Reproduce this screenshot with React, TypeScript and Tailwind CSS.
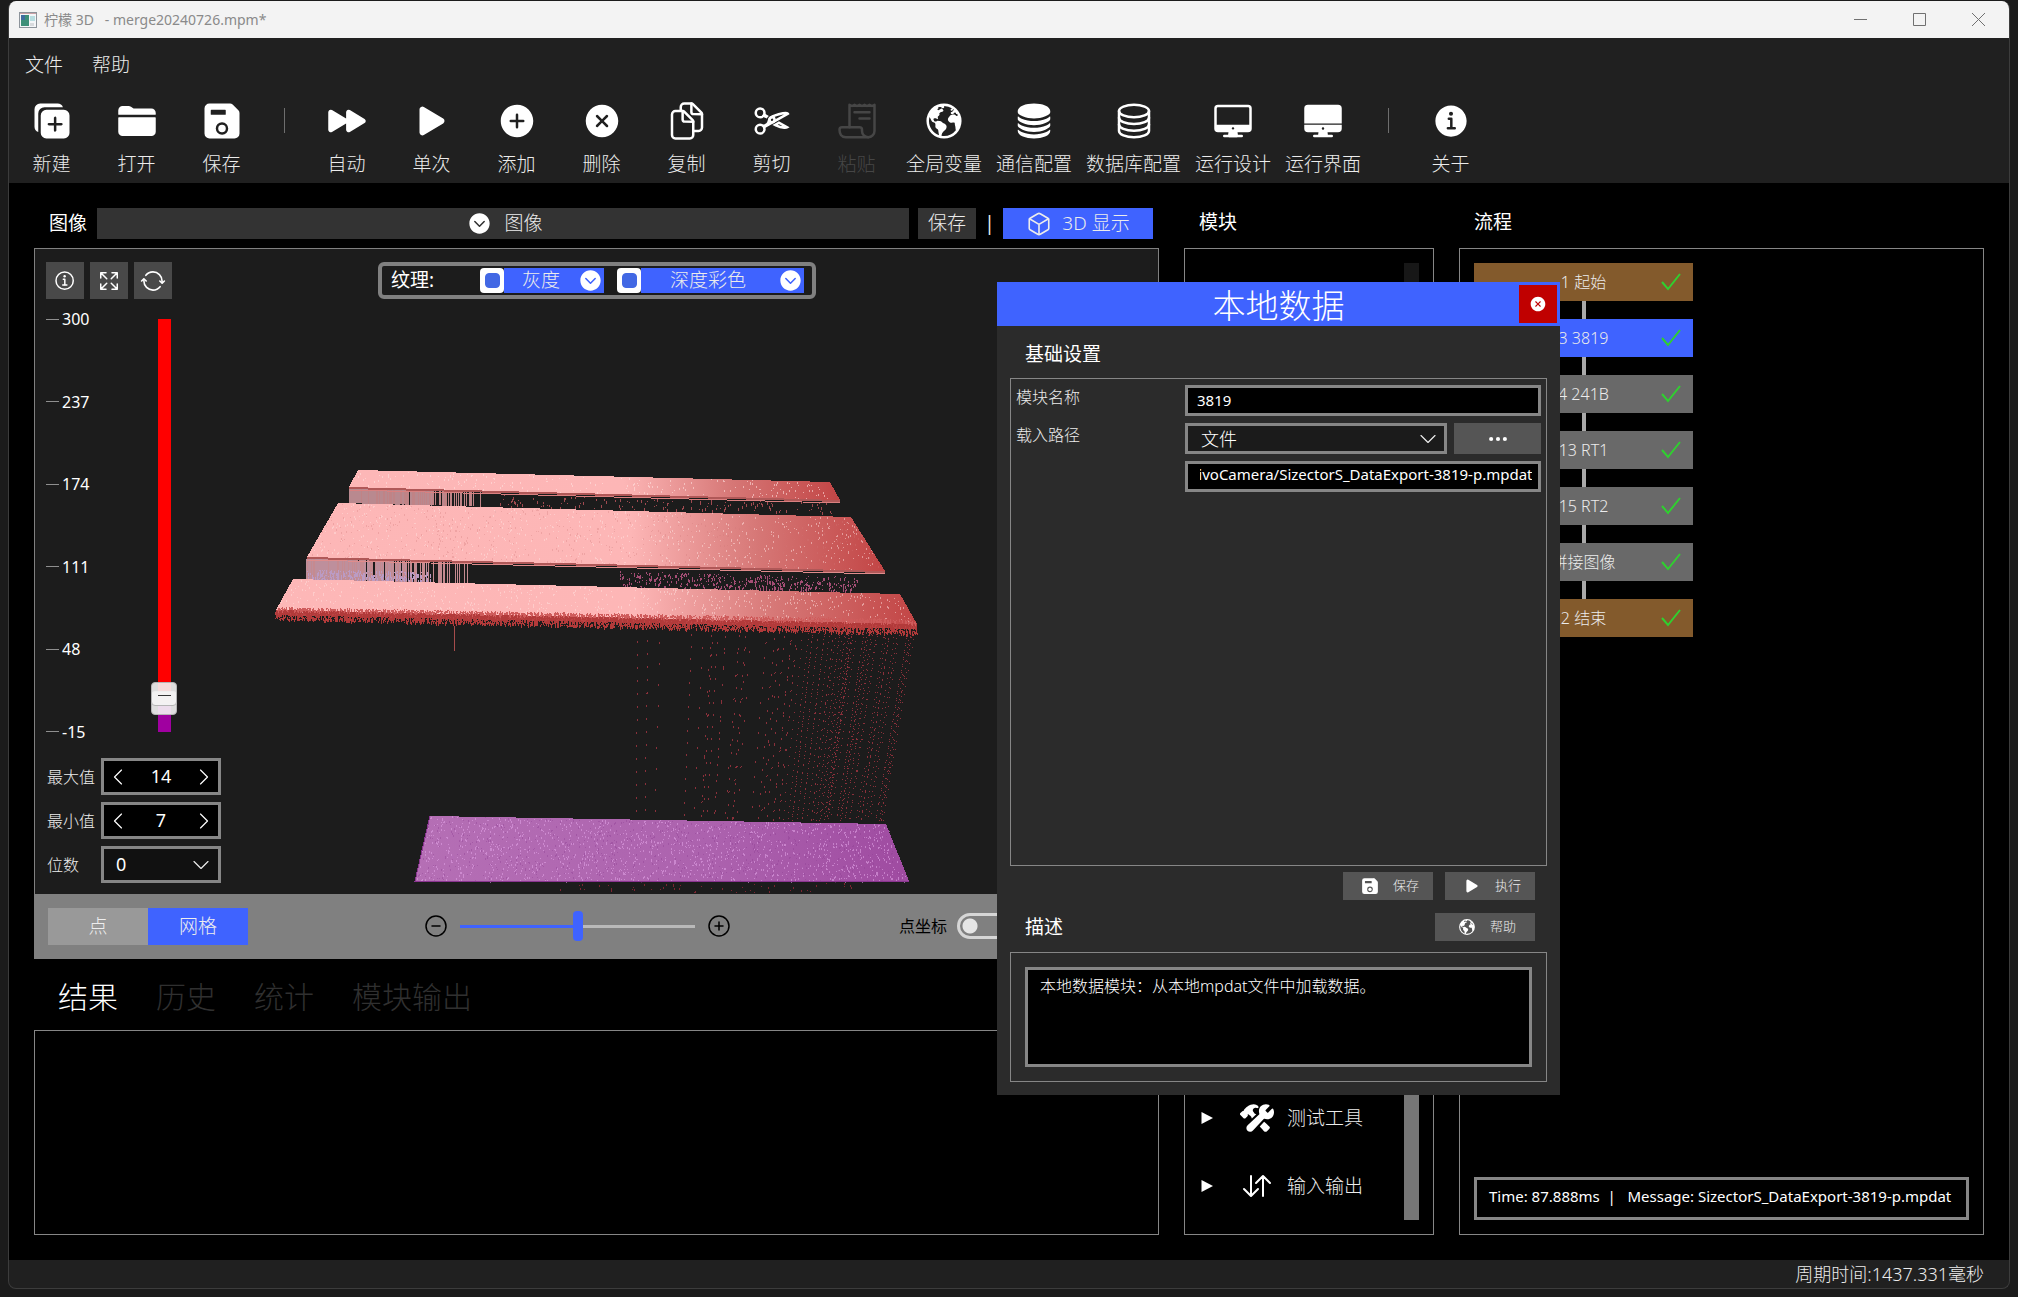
import { useEffect, useRef, useState } from 'react';
import type { ReactNode } from 'react';
import {
    IoAddCircle, IoChevronDownCircle, IoCloseCircle, IoConstruct, IoCubeOutline, IoCutOutline, IoDesktop,
    IoDesktopOutline, IoDocumentsOutline, IoDuplicate, IoEarth, IoEllipsisHorizontal, IoExpandOutline, IoFolder,
    IoInformationCircle, IoInformationCircleOutline, IoPlay, IoPlayForward, IoSave, IoServer, IoServerOutline,
    IoSwapVertical, IoSyncOutline,
} from 'react-icons/io5';
import { ChevronDown, ChevronLeft, ChevronRight, CircleMinus, CirclePlus } from 'lucide-react';

type Point = [number, number];
type Quad = [Point, Point, Point, Point];

const BOX = 'border-[3px] border-[#868686] text-white outline-none';

const flowNodes = [
    { name: '1 起始', color: 'bg-[#835a2c]' },
    { name: '3 3819', color: 'bg-[#3f63ff]' },
    { name: '4 241B', color: 'bg-[#696969]' },
    { name: '13 RT1', color: 'bg-[#696969]' },
    { name: '15 RT2', color: 'bg-[#696969]' },
    { name: '拼接图像', color: 'bg-[#696969]' },
    { name: '2 结束', color: 'bg-[#835a2c]' },
];

export default function App() {
    return (
        <div className="flex min-h-screen flex-col bg-[#1b1b1b] pt-px pr-2 pb-2 pl-2 font-['Noto_Sans','Noto_Sans_CJK_SC',sans-serif] text-base font-light text-[#ececec]">
            <div className="relative flex flex-1 flex-col overflow-hidden rounded-lg border-x border-b border-[#3c3c3c] bg-[#202020]">
                <TitleBar />
                <nav className="flex h-[54px] items-center gap-[29px] px-4 pt-px text-[19px]">
                    <button type="button">文件</button>
                    <button type="button">帮助</button>
                </nav>
                <Toolbar />
                <main className="flex flex-1 gap-[25px] bg-black p-[25px]">
                    <ImageColumn />
                    <ModuleColumn />
                    <FlowColumn />
                </main>
                <footer className="flex h-7 items-center justify-end px-[25px] text-[18px]">周期时间:1437.331毫秒</footer>
                <LocalDataDialog />
            </div>
        </div>
    )
}

function TitleBar() {
    return (
        <header className="flex h-[37px] items-center bg-[#f3f3f3] pl-2.5 font-normal text-[#8a8a8a]">
            <svg viewBox="0 0 18 16" className="h-4 w-[18px]">
                <rect x="0.5" y="0.5" width="17" height="15" fill="#f4f6f8" stroke="#8d949b" />
                <path d="M1 1.5h16" stroke="#c9a0a5" />
                <rect x="2" y="3" width="8" height="11" fill="#3d8f78" />
                <rect x="2" y="3" width="4" height="5" fill="#3f6d9e" />
                <rect x="11" y="4" width="5" height="5" fill="#b8dde0" />
                <rect x="11" y="11" width="4" height="3" fill="#d7dadd" />
            </svg>
            <span className="pl-[7px] text-[14px] whitespace-pre">柠檬 3D   - merge20240726.mpm*</span>
            <div className="ml-auto flex pr-px">
                <WindowButton label="最小化" path="M1 7.5h13" />
                <WindowButton label="最大化" path="M1.5 1.5h12v12h-12z" />
                <WindowButton label="关闭" path="M1 1l13 13M14 1L1 14" />
            </div>
        </header>
    )
}

function WindowButton({ label, path }: { label: string, path: string }) {
    return (
        <button type="button" aria-label={label} className="flex h-[37px] w-[59px] items-center justify-center">
            <svg viewBox="0 0 15 15" className="size-[15px]" fill="none" stroke="#707070"><path d={path} /></svg>
        </button>
    )
}

function ToolItem({ icon, label, disabled }: { icon: ReactNode, label: string, disabled?: boolean }) {
    return (
        <button type="button" disabled={disabled} className="flex min-w-[85px] flex-col items-center gap-[9px] px-[7px] pt-[9px] text-[19px] leading-[28px] text-[#ececec] disabled:text-[#464646]">
            {icon}
            <span>{label}</span>
        </button>
    )
}

function Divider() {
    return <div className="mr-[19px] ml-5 mt-4 h-[25px] w-px shrink-0 bg-[#6e6e6e]" />
}

function Toolbar() {
    return (
        <div className="flex h-[91px] items-start">
            <ToolItem icon={<IoDuplicate size={40} color="#fff" />} label="新建" />
            <ToolItem icon={<IoFolder size={40} color="#fff" />} label="打开" />
            <ToolItem icon={<IoSave size={40} color="#fff" />} label="保存" />
            <Divider />
            <ToolItem icon={<IoPlayForward size={40} color="#fff" />} label="自动" />
            <ToolItem icon={<IoPlay size={40} color="#fff" />} label="单次" />
            <ToolItem icon={<IoAddCircle size={40} color="#fff" />} label="添加" />
            <ToolItem icon={<IoCloseCircle size={40} color="#fff" />} label="删除" />
            <ToolItem icon={<IoDocumentsOutline size={40} color="#fff" />} label="复制" />
            <ToolItem icon={<IoCutOutline size={40} color="#fff" />} label="剪切" />
            <ToolItem icon={<PasteIcon />} label="粘贴" disabled />
            <ToolItem icon={<IoEarth size={40} color="#fff" />} label="全局变量" />
            <ToolItem icon={<IoServer size={40} color="#fff" />} label="通信配置" />
            <ToolItem icon={<IoServerOutline size={40} color="#fff" />} label="数据库配置" />
            <ToolItem icon={<IoDesktopOutline size={40} color="#fff" />} label="运行设计" />
            <ToolItem icon={<IoDesktop size={40} color="#fff" />} label="运行界面" />
            <Divider />
            <ToolItem icon={<IoInformationCircle size={40} color="#fff" />} label="关于" />
        </div>
    )
}

function PasteIcon() {
    return (
        <svg viewBox="0 0 512 512" className="size-10" fill="none" stroke="currentColor" strokeWidth="32" strokeLinejoin="round" strokeLinecap="round">
            <path d="M160 336V48l32 16 32-16 32 16 32-16 32 16 32-16 32 16 32-16 32 16 32-16v336a80 80 0 01-80 80" />
            <path d="M400 464a80 80 0 01-80-80v-16a32 32 0 00-32-32H64a32 32 0 00-32 32c0 50 24 96 80 96h288" />
            <path d="M224 144h192M288 224h128" />
        </svg>
    )
}

function ImageColumn() {
    return (
        <section className="flex min-w-0 flex-1 flex-col">
            <div className="flex items-center pr-[6px] text-[19px]">
                <h2 className="w-[63px] pl-[15px] font-normal text-white">图像</h2>
                <button type="button" className="flex h-[31px] flex-1 items-center justify-center gap-3 bg-[#333] pl-1">
                    <IoChevronDownCircle size={25} className="text-white" />
                    图像
                </button>
                <button type="button" className="ml-[9px] h-[31px] w-[58px] bg-[#333]">保存</button>
                <span className="w-[27px] text-center font-normal">|</span>
                <button type="button" className="flex h-[31px] w-[150px] items-center justify-center gap-2.5 bg-[#3f63ff]">
                    <IoCubeOutline size={26} />
                    3D 显示
                </button>
            </div>
            <Viewport />
            <div className="flex h-[71px] items-center gap-[38px] px-6 pt-1 text-[30px] text-[#303030]" role="tablist">
                <button type="button" role="tab" aria-selected className="text-white">结果</button>
                <button type="button" role="tab">历史</button>
                <button type="button" role="tab">统计</button>
                <button type="button" role="tab">模块输出</button>
            </div>
            <div className="flex-1 border border-[#868686]" />
        </section>
    )
}

function Viewport() {
    const [zoom, setZoom] = useState(50);
    return (
        <div className="mt-[9px] flex h-[711px] flex-col border border-[#808080] bg-[#1c1c1c]">
            <div className="relative flex-1 overflow-hidden">
                <PointCloud />
                <div className="relative flex items-start pt-[13px] pl-[11px]">
                    <div className="flex gap-[6px] text-white">
                        <button type="button" aria-label="信息" className="flex h-[37px] w-[38px] items-center justify-center bg-[#494949]"><IoInformationCircleOutline size={24} /></button>
                        <button type="button" aria-label="全屏" className="flex h-[37px] w-[38px] items-center justify-center bg-[#494949]"><IoExpandOutline size={24} /></button>
                        <button type="button" aria-label="刷新" className="flex h-[37px] w-[38px] items-center justify-center bg-[#494949]"><IoSyncOutline size={26} /></button>
                    </div>
                    <TextureBar />
                </div>
                <DepthScale />
                <DepthFields />
            </div>
            <div className="flex h-16 items-center bg-[#808080] pl-[13px]">
                <div className="flex text-[19px] text-[#eee]">
                    <button type="button" className="h-[37px] w-[100px] bg-[#999]">点</button>
                    <button type="button" className="h-[37px] w-[100px] bg-[#3f63ff]">网格</button>
                </div>
                <div className="ml-[176px] flex items-center gap-3 text-black">
                    <button type="button" aria-label="缩小"><CircleMinus size={24} strokeWidth={1.5} /></button>
                    <input
                        type="range"
                        aria-label="缩放"
                        value={zoom}
                        onChange={(evt) => setZoom(Number(evt.target.value))}
                        className="h-[3px] w-[235px] appearance-none bg-linear-to-r from-[#3f63ff] from-50% to-[#b9b9b9] to-50% [&::-webkit-slider-thumb]:h-[30px] [&::-webkit-slider-thumb]:w-2.5 [&::-webkit-slider-thumb]:appearance-none [&::-webkit-slider-thumb]:rounded-[4px] [&::-webkit-slider-thumb]:bg-[#3f63ff]"
                    />
                    <button type="button" aria-label="放大"><CirclePlus size={24} strokeWidth={1.5} /></button>
                </div>
                <label className="ml-[168px] flex items-center gap-2.5 font-normal text-black">
                    点坐标
                    <input type="checkbox" role="switch" className="h-[26px] w-[60px] appearance-none rounded-full border-[3px] border-[#d6d6d6] bg-[radial-gradient(circle_at_10px_10px,#e6e6e6_7px,transparent_8px)]" />
                </label>
            </div>
        </div>
    )
}

function TextureBar() {
    return (
        <div className="ml-[206px] flex h-[37px] items-center rounded-md border-4 border-[#808080] pr-2 pl-[9px] text-[19px]">
            <span className="w-[89px] font-normal text-white">纹理:</span>
            <TextureCheck label="灰度" />
            <button type="button" className="mr-[13px] flex h-[25px] w-[100px] items-center justify-end gap-[18px] bg-[#3f63ff] pr-px">
                灰度
                <IoChevronDownCircle size={25} className="text-white" />
            </button>
            <TextureCheck label="深度彩色" />
            <button type="button" className="flex h-[25px] w-[163px] items-center justify-end gap-8 bg-[#3f63ff] pr-px">
                深度彩色
                <IoChevronDownCircle size={25} className="text-white" />
            </button>
        </div>
    )
}

function TextureCheck({ label }: { label: string }) {
    return (
        <label className="relative flex h-[25px] w-6 items-center justify-center rounded-[4px] bg-white">
            <input type="checkbox" defaultChecked aria-label={label} className="size-[15px] appearance-none rounded-[4px] border border-[#4268e4] checked:bg-[#4268e4]" />
        </label>
    )
}

function DepthScale() {
    const [range, setRange] = useState({ max: 14, min: 7 });
    const slider = 'pointer-events-none absolute -top-3 left-0 h-[437px] w-[26px] appearance-none bg-transparent [direction:rtl] [writing-mode:vertical-lr] [&::-webkit-slider-thumb]:pointer-events-auto [&::-webkit-slider-thumb]:h-6 [&::-webkit-slider-thumb]:w-[26px] [&::-webkit-slider-thumb]:appearance-none [&::-webkit-slider-thumb]:rounded-[4px] [&::-webkit-slider-thumb]:border [&::-webkit-slider-thumb]:border-[#b5b5b5] [&::-webkit-slider-thumb]:bg-[#f4f4f4]/90';
    return (
        <div className="relative mt-[7px] flex pl-[11px]">
            <ul className="flex h-[439px] w-[105px] flex-col justify-between leading-[26px] font-normal text-white">
                {[300, 237, 174, 111, 48, -15].map((tick) => (
                    <li key={tick} className="flex items-center gap-[3px]">
                        <span className="h-px w-[13px] bg-[#8f8f8f]" />
                        {tick}
                    </li>
                ))}
            </ul>
            <div className="relative my-[13px] h-[413px] w-[26px]">
                <div className="mx-auto flex h-full w-[13px] flex-col justify-end bg-[#f00]">
                    <div className="h-[29px] bg-[#a000a0]" />
                </div>
                <input type="range" aria-label="最小值" min={-15} max={300} value={range.min} onChange={(evt) => setRange({ ...range, min: Number(evt.target.value) })} className={slider} />
                <input type="range" aria-label="最大值" min={-15} max={300} value={range.max} onChange={(evt) => setRange({ ...range, max: Number(evt.target.value) })} className={slider} />
                <span className="pointer-events-none absolute bottom-9 left-[7px] h-px w-[13px] bg-[#333]" />
            </div>
        </div>
    )
}

function DepthFields() {
    return (
        <div className="relative mt-[13px] flex flex-col gap-[7px] pl-3">
            <Stepper id="depth-max" label="最大值" value={14} />
            <Stepper id="depth-min" label="最小值" value={7} />
            <div className="relative flex items-center">
                <label htmlFor="digits" className="w-[54px]">位数</label>
                <select id="digits" className={`h-[37px] w-[120px] appearance-none bg-[#111] pl-3 text-[18px] font-normal ${BOX}`}>
                    <option>0</option>
                </select>
                <ChevronDown size={28} strokeWidth={1} className="pointer-events-none absolute left-[140px]" />
            </div>
        </div>
    )
}

function Stepper({ id, label, value }: { id: string, label: string, value: number }) {
    const [num, setNum] = useState(value);
    return (
        <div className="flex items-center">
            <label htmlFor={id} className="w-[54px]">{label}</label>
            <div className={`flex h-[37px] w-[120px] items-center justify-between bg-black ${BOX}`}>
                <button type="button" aria-label={`${label} -`} onClick={() => setNum(num - 1)}><ChevronLeft size={28} strokeWidth={1} /></button>
                <input id={id} value={num} onChange={(evt) => setNum(Number(evt.target.value))} className="w-10 text-center text-[18px] font-normal outline-none" />
                <button type="button" aria-label={`${label} +`} onClick={() => setNum(num + 1)}><ChevronRight size={28} strokeWidth={1} /></button>
            </div>
        </div>
    )
}

function ModuleColumn() {
    return (
        <section className="flex w-[250px] flex-col">
            <h2 className="h-[31px] px-[15px] text-[19px] font-normal text-white">模块</h2>
            <div className="mt-[9px] flex flex-1 justify-between border border-[#868686] py-3.5 pr-3.5 pl-[14px]">
                <div className="flex flex-1 flex-col justify-end text-[19px]">
                    <ModuleGroup icon={<IoConstruct size={34} />} name="测试工具" />
                    <ModuleGroup icon={<IoSwapVertical size={32} />} name="输入输出" />
                </div>
                <div className="flex w-[15px] flex-col justify-end bg-[#171717]">
                    <div className="h-[400px] bg-[#767676]" />
                </div>
            </div>
        </section>
    )
}

function ModuleGroup({ icon, name }: { icon: ReactNode, name: string }) {
    return (
        <button type="button" className="flex h-[68px] items-center">
            <svg viewBox="0 0 12 12" className="ml-0.5 size-3 fill-white"><path d="M0.500 0L12 6 0.500 12z" /></svg>
            <span className="ml-5 flex w-[48px] justify-center text-white">{icon}</span>
            <span className="ml-[6px]">{name}</span>
        </button>
    )
}

function FlowColumn() {
    return (
        <section className="flex w-[525px] flex-col">
            <h2 className="h-[31px] px-[15px] text-[19px] font-normal text-white">流程</h2>
            <div className="mt-[9px] flex flex-1 flex-col justify-between border border-[#868686] p-3.5">
                <ol className="flex w-[219px] flex-col">
                    {flowNodes.map((node, index) => (
                        <li key={node.name}>
                            {index > 0 && <div className="mx-auto h-[18px] w-1 bg-[#a9a9a9]" />}
                            <div className={`relative flex h-[38px] items-center justify-center ${node.color}`}>
                                {node.name}
                                <svg viewBox="0 0 20 18" className="absolute right-3 h-[18px] w-5" fill="none" stroke="#2fd02f" strokeWidth="2"><path d="M1 9l6 7L19 1" /></svg>
                            </div>
                        </li>
                    ))}
                </ol>
                <div className={`h-[43px] bg-black px-3 pt-[5px] text-[15px] font-normal whitespace-pre ${BOX}`}>Time: 87.888ms  |   Message: SizectorS_DataExport-3819-p.mpdat</div>
            </div>
        </section>
    )
}

function LocalDataDialog() {
    const pathInput = useRef<HTMLInputElement>(null);
    useEffect(() => {
        // keep the file name in sight when the path is too long
        if (pathInput.current) {
            pathInput.current.scrollLeft = pathInput.current.scrollWidth;
        }
    }, [])
    return (
        <div role="dialog" aria-label="本地数据" className="absolute top-[281px] left-[988px] flex h-[813px] w-[563px] flex-col bg-[#2b2b2b]">
            <div className="relative flex h-11 items-center justify-center bg-[#3f63ff] pt-1 text-[33px] text-white">
                本地数据
                <button type="button" aria-label="关闭" className="absolute top-[3px] right-[3px] flex h-[38px] w-[38px] items-center justify-center bg-[#c00000]">
                    <IoCloseCircle size={18} />
                </button>
            </div>
            <div className="flex flex-1 flex-col px-[13px] pb-[13px]">
                <h3 className="h-[52px] px-[15px] pt-3.5 text-[19px] font-normal text-white">基础设置</h3>
                <form className="grid flex-1 grid-cols-[169px_1fr] content-start gap-y-[7px] border border-[#868686] px-[5px] py-[6px]">
                    <label htmlFor="module-name">模块名称</label>
                    <input id="module-name" defaultValue="3819" className={`h-[31px] bg-black px-[9px] pb-0.5 text-[15px] font-normal ${BOX}`} />
                    <label htmlFor="load-type">载入路径</label>
                    <div className="flex gap-[7px]">
                        <div className="relative flex flex-1 items-center">
                            <select id="load-type" className={`h-[31px] w-full appearance-none bg-[#1b1b1b] pl-[13px] text-lg leading-none ${BOX}`}>
                                <option>文件</option>
                            </select>
                            <ChevronDown size={28} strokeWidth={1} className="pointer-events-none absolute right-[5px]" />
                        </div>
                        <button type="button" aria-label="浏览" className="flex h-[31px] w-[87px] items-center justify-center bg-[#555] text-white"><IoEllipsisHorizontal size={22} /></button>
                    </div>
                    <input ref={pathInput} aria-label="文件路径" defaultValue="D:/Data/VivoCamera/SizectorS_DataExport-3819-p.mpdat" className={`col-start-2 h-[31px] bg-black pr-[6px] pb-1.5 pl-3 text-[15px] font-normal ${BOX}`} />
                </form>
                <div className="flex justify-end gap-3 px-3 pt-[6px] text-[13px]">
                    <button type="button" className="flex h-7 w-[90px] items-center gap-3.5 bg-[#555] pl-[18px]"><IoSave size={18} className="text-white" />保存</button>
                    <button type="button" className="flex h-7 w-[90px] items-center gap-3.5 bg-[#555] pl-[18px]"><IoPlay size={18} className="text-white" />执行</button>
                </div>
                <div className="flex h-[52px] items-center justify-between pt-0.5 pr-3 pl-[15px]">
                    <h3 className="text-[19px] font-normal text-white">描述</h3>
                    <button type="button" className="flex h-7 w-[100px] items-center gap-3.5 bg-[#555] pl-[23px] text-[13px]"><IoEarth size={18} className="text-white" />帮助</button>
                </div>
                <div className="flex h-[130px] border border-[#868686] p-3.5">
                    <textarea aria-label="描述" readOnly defaultValue="本地数据模块：从本地mpdat文件中加载数据。" className={`w-full resize-none bg-black px-3 pt-1 ${BOX}`} />
                </div>
            </div>
        </div>
    )
}

function createRandom(seed: number) {
    let state = seed;
    return () => {
        state = (state * 16807) % 2147483647;
        return state / 2147483647;
    }
}

// corners run top left, top right, bottom right, bottom left
function pointIn(quad: Quad, u: number, v: number): Point {
    const [a, b, c, d] = quad;
    const x = (1 - v) * (a[0] + (b[0] - a[0]) * u) + v * (d[0] + (c[0] - d[0]) * u);
    const y = (1 - v) * (a[1] + (b[1] - a[1]) * u) + v * (d[1] + (c[1] - d[1]) * u);
    return [Math.round(x), Math.round(y)];
}

function specks(quad: Quad, count: number, seed: number, length = 2, spread = (n: number) => n) {
    const random = createRandom(seed);
    let path = '';
    for (let i = 0; i < count; i++) {
        const [x, y] = pointIn(quad, random(), spread(random()));
        path += `M${x} ${y}v${1 + Math.floor(random() * length)}`;
    }
    return path;
}

// hanging threads, solid on the left and thinning out to the right
function curtain(left: number, right: number, top: number, bottom: number, density: number, seed: number) {
    const random = createRandom(seed);
    let path = '';
    for (let x = left; x < right; x++) {
        const u = (x - left) / (right - left);
        if (random() < density * (1 - u * u)) {
            path += `M${x} ${Math.round(top + u * 4)}V${Math.round(bottom + u * 4)}`;
        }
    }
    return path;
}

// dotted rays that drop from the front edge down to the floor
function rays() {
    const random = createRandom(77);
    const lines: { d: string, dash: string, offset: number }[] = [];
    for (let i = 0; i < 74; i++) {
        const u = Math.pow(random(), 0.6);
        const x = 635 + 280 * u;
        lines.push({
            d: `M${Math.round(x)} 632L${Math.round(x - 2 - 30 * u)} 822`,
            dash: u > 0.6 ? `1 ${4 + Math.floor(random() * 5)}` : `2 ${10 + Math.floor(random() * 12)}`,
            offset: Math.floor(random() * 20),
        });
    }
    return lines;
}

const points = (quad: Quad) => quad.map((p) => p.join(',')).join(' ');

const backSlab: Quad = [[358, 471], [830, 483], [840, 501], [349, 488]];
const midSlab: Quad = [[338, 504], [851, 518], [885, 572], [307, 558]];
const frontSlab: Quad = [[293, 580], [900, 595], [917, 625], [276, 611]];
const frontEdge: Quad = [[276, 609], [916, 623], [917, 635], [275, 620]];
const floor: Quad = [[430, 817], [886, 825], [909, 882], [415, 882]];

function PointCloud() {
    return (
        <svg viewBox="35 250 966 644" className="absolute top-0 left-0 h-[644px] w-[966px]" fill="none" shapeRendering="crispEdges">
            <defs>
                <linearGradient id="slab">
                    <stop offset="0" stopColor="#fdb7b7" />
                    <stop offset="0.560" stopColor="#fdb6b6" />
                    <stop offset="0.780" stopColor="#d67776" />
                    <stop offset="1" stopColor="#c24545" />
                </linearGradient>
                <linearGradient id="floor">
                    <stop offset="0" stopColor="#b56fb5" />
                    <stop offset="0.600" stopColor="#ac62ae" />
                    <stop offset="1" stopColor="#9f4ba1" />
                </linearGradient>
            </defs>
            {rays().map((ray, i) => <path key={i} d={ray.d} strokeDasharray={ray.dash} strokeDashoffset={ray.offset} stroke="#8a303a" />)}
            <path d={specks([[560, 884], [870, 884], [870, 893], [560, 893]], 50, 5)} stroke="#7c2530" />

            <path d={curtain(349, 496, 489, 504, 1.1, 11)} stroke="#c08386" />
            <path d={curtain(349, 450, 489, 504, 0.8, 12)} stroke="#b9898f" />
            <path d={specks([[500, 496], [835, 503], [835, 514], [500, 507]], 130, 13, 3)} stroke="#a04a50" />
            <path d={curtain(306, 480, 560, 583, 1, 21)} stroke="#c58a90" />
            <path d={curtain(306, 430, 560, 582, 0.8, 22)} stroke="#be8f9c" />
            <path d={specks([[307, 570], [430, 573], [430, 582], [307, 580]], 260, 24, 4)} stroke="#bb9bc4" />
            <path d={specks([[620, 572], [860, 578], [850, 593], [620, 588]], 420, 23, 3)} stroke="#a34d74" />

            <polygon points={points(backSlab)} fill="url(#slab)" />
            <path d={specks(backSlab, 200, 31)} stroke="#ffe0de" opacity="0.600" />
            <path d="M349 489L840 502" stroke="#b05858" strokeWidth="2" />
            <path d="M349 491L840 504" stroke="#d98080" />

            <polygon points={points(midSlab)} fill="url(#slab)" />
            <path d={specks(midSlab, 700, 41)} stroke="#ffe0de" opacity="0.500" />
            <path d={specks(midSlab, 500, 42)} stroke="#cf7777" opacity="0.300" />
            <path d="M307 559L885 573" stroke="#b05858" strokeWidth="2" />
            <path d="M306 561L885 575" stroke="#e08c8c" />

            <polygon points={points([[276, 610], [916, 624], [917, 630], [275, 616]])} fill="#bb4444" />
            <path d={specks(frontEdge, 7000, 53, 3, (n) => n * n)} stroke="#b23a3a" />
            <polygon points={points(frontSlab)} fill="url(#slab)" />
            <path d={specks(frontSlab, 600, 51)} stroke="#ffe0de" opacity="0.500" />
            <path d={specks([[278, 608], [915, 620], [916, 624], [277, 611]], 1200, 52, 3)} stroke="#cf5c5c" />
            <path d="M454 627v25" stroke="#a64c4c" />

            <polygon points={points(floor)} fill="url(#floor)" />
            <path d={specks(floor, 1500, 61)} stroke="#dd9fe2" opacity="0.600" />
            <path d={specks(floor, 700, 62)} stroke="#8f3f94" opacity="0.400" />
            <path d="M430 817L415 882H909" stroke="#8a3590" />
        </svg>
    )
}
